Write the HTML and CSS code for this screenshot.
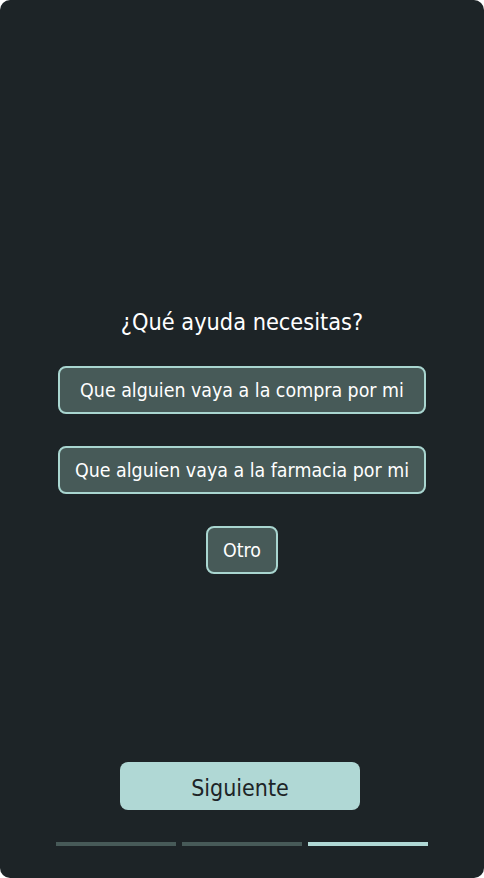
FILE: index.html
```html
<!DOCTYPE html>
<html lang="es">
<head>
<meta charset="utf-8">
<link rel="stylesheet" href="styles.css">
</head>
<body>
<div class="screen">
  <div class="content">
    <h1 class="title">¿Qué ayuda necesitas?</h1>
    <div class="options">
      <button class="option wide">Que alguien vaya a la compra por mi</button>
      <button class="option wide">Que alguien vaya a la farmacia por mi</button>
      <button class="option">Otro</button>
    </div>
  </div>
  <div class="footer">
    <button class="next">Siguiente</button>
    <div class="progress">
      <span class="step"></span>
      <span class="step"></span>
      <span class="step active"></span>
    </div>
  </div>
</div>
</body>
</html>
```
FILE: styles.css
```css
html, body {
  margin: 0;
  padding: 0;
  background: #ffffff;
}
.screen {
  width: 484px;
  height: 878px;
  box-sizing: border-box;
  background: #1d2427;
  border-radius: 10px;
  display: flex;
  flex-direction: column;
  align-items: center;
  font-family: "DejaVu Sans Condensed", "DejaVu Sans", sans-serif;
  font-stretch: condensed;
  color: #ffffff;
}
.content {
  margin-top: 305px;
  display: flex;
  flex-direction: column;
  align-items: center;
}
.title {
  margin: 0;
  font-size: 23.3px;
  font-weight: normal;
  line-height: 34px;
}
.options {
  margin-top: 27px;
  display: flex;
  flex-direction: column;
  align-items: center;
  gap: 32px;
}
.option {
  height: 48px;
  box-sizing: border-box;
  padding: 1px 15px 0;
  background: #475a58;
  border: 2px solid #a9d6d0;
  border-radius: 8px;
  color: #ffffff;
  font-family: inherit;
  font-stretch: inherit;
  font-size: 19.4px;
}
.option.wide {
  width: 368px;
  padding: 1px 0 0;
}
.footer {
  margin-top: auto;
  margin-bottom: 32px;
  display: flex;
  flex-direction: column;
  align-items: center;
}
.next {
  width: 240px;
  height: 48px;
  margin-right: 4px;
  padding: 3px 0 0;
  border: none;
  border-radius: 8px;
  background: #b0d8d5;
  color: #1d2427;
  font-family: inherit;
  font-stretch: inherit;
  font-size: 23px;
}
.progress {
  margin-top: 32px;
  display: flex;
  gap: 6px;
}
.step {
  width: 120px;
  height: 4px;
  background: #475a58;
}
.step.active {
  background: #b0d8d5;
}
```
